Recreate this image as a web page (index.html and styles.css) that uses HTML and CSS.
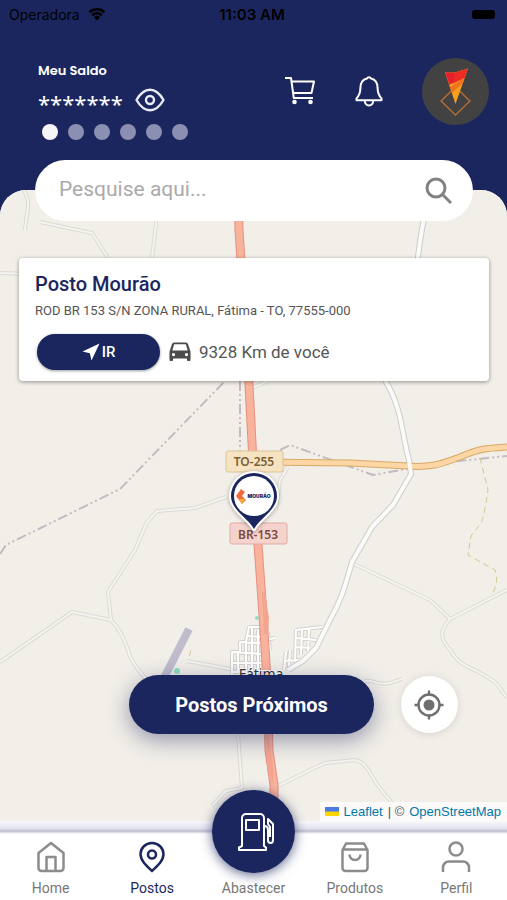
FILE: index.html
```html
<!DOCTYPE html>
<html lang="pt-BR">
<head>
    <meta charset="UTF-8">
    <meta name="viewport" content="width=device-width, initial-scale=1.0">
    <title>Postos</title>
    <link rel="stylesheet" href="styles.css">
</head>
<body>
    <div class="app">
        <div class="status-bar">
            <div class="carrier">
                <span>Operadora</span>
                <svg width="18" height="14" viewBox="0 0 18 14">
                    <path d="M1.5 5.2a11 11 0 0 1 15 0M4.2 8.2a7 7 0 0 1 9.6 0" fill="none" stroke="#000" stroke-width="2.6"/>
                    <path d="M9 13.6 5.9 10.3a4.5 4.5 0 0 1 6.2 0z"/>
                </svg>
            </div>
            <span class="clock">11:03 AM</span>
            <span class="battery"></span>
        </div>

        <header class="header">
            <div class="balance">
                <span class="balance-label">Meu Saldo</span>
                <div class="balance-row">
                    <span class="balance-value">*******</span>
                    <button type="button" class="icon-btn" aria-label="Mostrar saldo">
                        <svg width="30" height="24" viewBox="0 0 30 24" fill="none" stroke="#e8ebf5" stroke-width="2.4">
                            <path d="M1.5 12C5.500 5 10 1.800 15 1.800S24.500 5 28.500 12C24.500 19 20 22.200 15 22.200S5.500 19 1.500 12z" stroke-linejoin="round"/>
                            <circle cx="15" cy="12" r="4"/>
                        </svg>
                    </button>
                </div>
                <div class="dots">
                    <span class="dot active"></span>
                    <span class="dot"></span>
                    <span class="dot"></span>
                    <span class="dot"></span>
                    <span class="dot"></span>
                    <span class="dot"></span>
                </div>
            </div>
            <div class="actions">
                <button type="button" class="icon-btn" aria-label="Carrinho">
                    <svg width="32" height="30" viewBox="0 0 32 30" fill="none" stroke="#fff" stroke-width="2" stroke-linejoin="round">
                        <path d="M1 2h6l2.800 20H29"/>
                        <path d="M7.500 5.500H30L27.500 17H9.200"/>
                        <circle cx="10.500" cy="26" r="2.300" fill="#fff" stroke="none"/>
                        <circle cx="26.500" cy="26" r="2.300" fill="#fff" stroke="none"/>
                    </svg>
                </button>
                <button type="button" class="icon-btn" aria-label="Notificações">
                    <svg width="30" height="34" viewBox="0 0 30 34" fill="none" stroke="#fff" stroke-width="2" stroke-linejoin="round">
                        <path d="M13 4.500a2.200 2.200 0 0 1 4 0c4 1 6.600 4.500 6.600 9.500 0 5 .8 7.300 3.900 10.400v1.800h-25v-1.800C5.600 21.300 6.400 19 6.400 14c0-5 2.600-8.500 6.600-9.500z"/>
                        <path d="M10.800 26.500c0 3 1.800 5 4.200 5s4.200-2 4.200-5"/>
                    </svg>
                </button>
                <a href="#perfil" class="avatar" aria-label="Minha conta">
                    <svg width="67" height="67" viewBox="0 0 67 67">
                        <circle cx="33.500" cy="33.500" r="33.500" fill="#424242"/>
                        <path d="M33.500 29 48 43 33.500 57 19 43z" fill="none" stroke="#b87035" stroke-width="1.300"/>
                        <path d="M23 14.500 33 14.500 46 10.500 33.500 46z" fill="#f5a11c"/>
                        <path d="M23 14.500 33.500 14.500 33 23 27.500 27z" fill="#e3202b"/>
                        <path d="M33.500 14.500 46 10.500 42.500 20 30 26z" fill="#ee2a24"/>
                        <path d="M42.500 20 28 29 30 35 41 25z" fill="#f0711f"/>
                    </svg>
                </a>
            </div>
        </header>

        <main class="map">
            <svg class="map-canvas" viewBox="0 190 507 631" preserveAspectRatio="xMidYMid slice" aria-label="Mapa">
                <defs>
                    <path id="tracks" d="M24 190C32 205 26 212 25 230M40 222 92 233 108 258M157 215 152 258M0 273 30 274M226 497 195 508 157 511 147 522 135 550 108 592 111 620M0 662 72 612 111 620C120 629 124 638 128 650 130 660 137 670 152 685M187 661 235 670M252 388 268 381M288 467 280 480 276 510M352 563 430 600 450 619 507 590M450 619C438 632 441 640 451 651 460 668 476 668 490 679 500 683 502 694 507 697M365 681C373 679 376 686 390 683L402 679M276 787 312 769 325 763 355 760C370 763 370 780 389 799 396 808 398 822 402 830M238 735 242 788 226 791 212 806"/>
                    <path id="local-road" d="M425 215C420 235 419 248 416 275L390 340 386 382C402 408 402 435 409 460L411 474 393 505 372 527 352 562C346 582 343 597 330 620L316 648 303 661 288 670"/>
                    <path id="streets" d="M249 627H265M249 627 246 642 240 642 240 652 232 652 232 674M232 652 262 654M240 642 262 643M246 642V674M252 628V672M258 630V673M238 652V673M232 663H264M232 672H266M246 636 264 637M266 640 275 638M268 632 270 650M296 630 322 627M296 630 295 662M302 630 301 655M309 629 308 652M296 638 316 640M295 647 310 648M286 652 284 670M290 650 289 667M284 661 300 660"/>
                </defs>
                <rect y="190" width="507" height="631" fill="#f2efe9"/>

                <g class="boundary">
                    <path d="M0 554 6 545 120 489 225 381"/>
                    <path d="M240 381V472"/>
                    <path d="M280 450 290 445 373 475 440 463 507 456"/>
                </g>
                <path class="footpath" d="M480 458 488 490C482 530 482 520 471 536L468 555 495 570C499 580 495 588 492 596M191 650 188 660"/>

                <use href="#tracks" class="track-case"/>
                <use href="#tracks" class="track"/>
                <use href="#streets" class="street-case"/>
                <use href="#streets" class="street"/>
                <use href="#local-road" class="road-case"/>

                <path class="runway" d="M189 629 164 678"/>
                <circle cx="177" cy="671" r="3" fill="#8de0c0"/>
                <circle cx="257" cy="618" r="2" fill="#8de0c0"/>

                <path class="state-case" d="M256 462 350 463 408 466C435 468 445 462 460 457 480 448 488 448 507 447"/>
                <path class="state" d="M256 462 350 463 408 466C435 468 445 462 460 457 480 448 488 448 507 447"/>
                <use href="#local-road" class="road"/>
                <path class="highway-case" d="M238 190 239 230 249 385 253 462 257 530 263 615 267 680 269 750 274 785 274 830"/>
                <path class="highway" d="M238 190 239 230 249 385 253 462 257 530 263 615 267 680 269 750 274 785 274 830"/>
                <path d="M262 592 265 592 269 618 268 634 264 634z" fill="#f4a592"/>
                <path d="M266 735 269 735 274 775 272 785 267 765z" fill="#f4a592"/>

                <text class="town" x="261" y="679">Fátima</text>

                <rect x="226" y="451" width="57" height="21" rx="2" fill="#f6e3c2" stroke="#dcc398"/>
                <text class="shield" x="254" y="466" fill="#7a5f34">TO-255</text>
                <rect x="230" y="523" width="57" height="21" rx="2" fill="#f5d3cd" stroke="#e0aaa2"/>
                <text class="shield" x="258" y="539" fill="#7d4a44">BR-153</text>

                <path class="pin" d="M254 529C249 519 231 510 231 496a23 23 0 0 1 46 0C277 510 259 519 254 529z"/>
                <circle cx="254" cy="496" r="20" fill="#fff"/>
                <path d="M236 496 241 489 245 492 242 496 246 500 242 504z" fill="#f26a3c"/>
                <path d="M239 499 245 499 242 504z" fill="#fbb034"/>
                <text class="pin-name" x="259" y="498">MOURÃO</text>
            </svg>

            <form class="search">
                <input type="search" placeholder="Pesquise aqui..." aria-label="Pesquise aqui">
                <button type="submit" class="icon-btn" aria-label="Pesquisar">
                    <svg width="28" height="28" viewBox="0 0 28 28" fill="none" stroke="#828282" stroke-width="3">
                        <circle cx="11" cy="11" r="9"/>
                        <path d="M17.500 17.500 26 26"/>
                    </svg>
                </button>
            </form>

            <article class="station">
                <h1>Posto Mourão</h1>
                <p class="address">ROD BR 153 S/N ZONA RURAL, Fátima - TO, 77555-000</p>
                <div class="station-row">
                    <button type="button" class="go-btn">
                        <svg width="18" height="18" viewBox="0 0 18 18"><path d="M17.500.5 9.500 17.500 7.800 10.200.5 8.500z" fill="#fff"/></svg>
                        IR
                    </button>
                    <svg class="car" width="22" height="20" viewBox="0 0 22 20" fill="#4b4b4b">
                        <path fill-rule="evenodd" d="M5 .5h12q1.500 0 2 1.500l2.500 7.500V18q0 1-1 1h-1.500q-1 0-1-1v-1.500h-14V18q0 1-1 1H1.500q-1 0-1-1V9.500L3 2Q3.500.5 5 .5zM5.200 2.300 3.300 8.500h15.400l-1.900-6.200zM4.500 11a1.600 1.600 0 1 0 .01 0zM17.500 11a1.600 1.600 0 1 0 .01 0z"/>
                    </svg>
                    <span class="distance">9328 Km de você</span>
                </div>
            </article>

            <div class="map-controls">
                <button type="button" class="nearby-btn">Postos Próximos</button>
                <button type="button" class="locate-btn" aria-label="Minha localização">
                    <svg width="30" height="30" viewBox="0 0 30 30">
                        <circle cx="15" cy="15" r="10.500" fill="none" stroke="#6f6f6f" stroke-width="2.400"/>
                        <path d="M15 .5v5M15 24.500v5M.5 15h5M24.500 15h5" stroke="#6f6f6f" stroke-width="2.400"/>
                        <circle cx="15" cy="15" r="5.500" fill="#6f6f6f"/>
                    </svg>
                </button>
            </div>

            <div class="attribution">
                <svg width="14" height="9" viewBox="0 0 14 9"><path fill="#4c7be1" d="M0 0h14v5H0z"/><path fill="#ffd500" d="M0 4.500h14V9H0z"/></svg>
                <a href="#leaflet">Leaflet</a> | © <a href="#osm">OpenStreetMap</a>
            </div>
        </main>

        <nav class="tabs">
            <a href="#home" class="tab">
                <svg width="30" height="32" viewBox="0 0 30 32">
                    <path d="M2.500 12 15 2 27.500 12V27a3 3 0 0 1-3 3H5.500a3 3 0 0 1-3-3z"/>
                    <path d="M10.500 30V16h9v14"/>
                </svg>
                <span>Home</span>
            </a>
            <a href="#postos" class="tab current">
                <svg width="30" height="32" viewBox="0 0 30 32">
                    <path d="M15 30C9 24.500 3.500 19.500 3.500 13a11.500 11 0 0 1 23 0C26.500 19.500 21 24.500 15 30z"/>
                    <circle cx="15" cy="13.500" r="4"/>
                </svg>
                <span>Postos</span>
            </a>
            <a href="#abastecer" class="tab">
                <span class="fuel">
                    <svg width="38" height="40" viewBox="-3 0 38 40">
                        <path d="M5 34V6a4 4 0 0 1 4-4h14a4 4 0 0 1 4 4v28l2 1.500V38H2v-2.500z"/>
                        <path d="M9 8h13v10H9z"/>
                        <path d="M27 14q4 0 4 4v10q0 3 2.500 3t2.500-3V12l-5-5v5l2 3v10"/>
                    </svg>
                </span>
                <span>Abastecer</span>
            </a>
            <a href="#produtos" class="tab">
                <svg width="30" height="32" viewBox="0 0 30 32">
                    <path d="M2.500 9 6 2.500h18L27.500 9v18a3 3 0 0 1-3 3h-19a3 3 0 0 1-3-3zM2.500 8.500h25"/>
                    <path d="M9.500 13.500a5.500 5.500 0 0 0 11 0"/>
                </svg>
                <span>Produtos</span>
            </a>
            <a href="#perfil" class="tab">
                <svg width="30" height="32" viewBox="0 0 30 32">
                    <circle cx="15" cy="8" r="6.500"/>
                    <path d="M2 31v-4.500a6 6 0 0 1 6-6h14a6 6 0 0 1 6 6V31"/>
                </svg>
                <span>Perfil</span>
            </a>
        </nav>
    </div>
</body>
</html>
```
FILE: styles.css
```css
* {
    box-sizing: border-box;
}
body {
    margin: 0;
    font-family: Roboto, sans-serif;
    background-color: #1c265e;
}
button {
    border: none;
    font-family: inherit;
    cursor: pointer;
}
svg {
    display: block;
    flex-shrink: 0;
}
.app {
    display: flex;
    flex-direction: column;
    min-height: 100vh;
}
.icon-btn {
    padding: 0;
    background: none;
}

/* Status bar */
.status-bar {
    display: grid;
    grid-template-columns: 1fr auto 1fr;
    align-items: center;
    height: 28px;
    padding: 0 12px 0 9px;
    font-family: Inter, sans-serif;
    font-size: 14px;
    color: #000;
}
.carrier {
    display: flex;
    align-items: center;
    gap: 8px;
}
.clock {
    font-size: 15px;
    font-weight: 600;
}
.battery {
    justify-self: end;
    width: 23px;
    height: 9px;
    border-radius: 3px;
    background: #000;
}

/* Header */
.header {
    display: flex;
    justify-content: space-between;
    padding: 32px 18px 50px 38px;
}
.balance-label {
    display: block;
    font-family: Poppins, Inter, sans-serif;
    font-size: 13px;
    font-weight: 600;
    line-height: 22px;
    color: #fff;
}
.balance-row {
    display: flex;
    align-items: center;
    gap: 12px;
    height: 36px;
}
.balance-value {
    height: 24px;
    font-family: "Noto Sans", sans-serif;
    font-size: 22px;
    line-height: 30px;
    color: #fff;
}
.dots {
    display: flex;
    gap: 10px;
    padding: 6px 4px 0;
}
.dot {
    width: 16px;
    height: 16px;
    border-radius: 50%;
    background: #8b90b3;
}
.dot.active {
    background: #f6f6f8;
}
.actions {
    display: flex;
    align-items: center;
    height: 62px;
    gap: 38px;
}

/* Map */
.map {
    position: relative;
    flex: 1;
    display: flex;
    flex-direction: column;
}
.map-canvas {
    position: absolute;
    inset: 0;
    width: 100%;
    height: 100%;
    border-radius: 26px 26px 0 0;
    background: #f2efe9;
}
.map-canvas path, .map-canvas use {
    stroke-linejoin: round;
}
.boundary {
    fill: none;
    stroke: #c3bbc3;
    stroke-width: 2;
    stroke-dasharray: 10 3 2 3 2 3;
}
.footpath {
    fill: none;
    stroke: #cfc990;
    stroke-dasharray: 6 4;
    stroke-width: 1;
}
.track-case, .track, .street-case, .street, .road-case, .road,
.state-case, .state, .highway-case, .highway, .runway {
    fill: none;
}
.track-case {
    stroke: #dcdad5;
    stroke-width: 4;
}
.track {
    stroke: #f5f4f0;
    stroke-width: 2;
}
.street-case {
    stroke: #d3d1cd;
    stroke-width: 4;
}
.street {
    stroke: #fff;
    stroke-width: 2;
}
.road-case {
    stroke: #cfcdc9;
    stroke-width: 6;
}
.road {
    stroke: #fbfbfa;
    stroke-width: 4;
}
.runway {
    stroke: #c0bccd;
    stroke-width: 8;
}
.state-case {
    stroke: #d9a866;
    stroke-width: 7;
}
.state {
    stroke: #fcd6a4;
    stroke-width: 5;
}
.highway-case {
    stroke: #e59080;
    stroke-width: 9;
}
.highway {
    stroke: #f9b29c;
    stroke-width: 7;
}
.town, .shield, .pin-name {
    font-family: "Noto Sans", sans-serif;
    text-anchor: middle;
}
.town {
    font-size: 14px;
    fill: #333;
    stroke: #fff;
    stroke-width: 2;
    paint-order: stroke;
}
.shield {
    font-size: 12px;
    font-weight: 600;
}
.pin {
    fill: #1c265e;
    stroke: #fff;
    stroke-width: 4;
    paint-order: stroke;
    filter: drop-shadow(0 1px 2px rgba(0, 0, 0, 0.3));
}
.pin-name {
    font-family: Inter, sans-serif;
    font-size: 5px;
    font-weight: 900;
    fill: #1c265e;
}
.search {
    position: relative;
    display: flex;
    align-items: center;
    height: 61px;
    margin: -30px 34px 0 35px;
    padding: 0 20px 0 24px;
    border-radius: 31px;
    background: #fff;
}
.search input {
    flex: 1;
    min-width: 0;
    padding: 0 0 4px;
    border: none;
    outline: none;
    background: none;
    font-family: inherit;
    font-size: 21px;
}
.search input::placeholder {
    color: #aaa;
}
.station {
    position: relative;
    margin: 37px 18px 0 19px;
    padding: 14px 16px 11px;
    border-radius: 4px;
    background: #fff;
    box-shadow: 0 1px 4px rgba(0, 0, 0, 0.4);
}
.station h1 {
    margin: 0;
    font-size: 20px;
    font-weight: 500;
    line-height: 25px;
    color: #1c265e;
}
.address {
    margin: 4px 0 13px;
    font-size: 13px;
    line-height: 20px;
    color: #555;
}
.station-row {
    display: flex;
    align-items: center;
    padding-left: 2px;
}
.go-btn {
    display: flex;
    align-items: center;
    justify-content: center;
    gap: 2px;
    width: 123px;
    height: 36px;
    border-radius: 18px;
    background: #1c265e;
    box-shadow: 0 1px 3px rgba(0, 0, 0, 0.4);
    color: #fff;
    font-size: 15px;
    font-weight: 500;
}
.car {
    margin: 0 8px 0 9px;
}
.distance {
    font-size: 17px;
    color: #555;
}
.map-controls {
    position: relative;
    display: grid;
    grid-template-columns: 1fr auto 1fr;
    align-items: center;
    margin-top: auto;
    padding: 0 4px 68px 0;
}
.nearby-btn {
    grid-column: 2;
    height: 59px;
    padding: 0 46px;
    border-radius: 30px;
    background: #1c265e;
    box-shadow: 0 6px 22px rgba(28, 38, 94, 0.45);
    color: #fff;
    font-size: 20px;
    font-weight: 700;
}
.locate-btn {
    display: grid;
    place-items: center;
    width: 57px;
    height: 57px;
    margin-left: 27px;
    padding: 0;
    border-radius: 50%;
    background: #fff;
    box-shadow: 0 1px 8px rgba(0, 0, 0, 0.12);
}
.attribution {
    position: relative;
    display: flex;
    align-items: center;
    align-self: flex-end;
    gap: 5px;
    height: 19px;
    padding: 0 6px 0 5px;
    background: rgba(255, 255, 255, 0.7);
    font-family: "Liberation Sans", Arial, sans-serif;
    font-size: 13px;
    color: #555;
}
.attribution a {
    color: #0078a8;
    text-decoration: none;
}

/* Bottom tabs */
.tabs {
    position: relative;
    display: grid;
    grid-template-columns: repeat(5, 1fr);
    padding: 20px 0 3px;
    background: linear-gradient(#f9f9fb, #dfe1ee 8px, #b9bbcc 10px, #fff 13px);
}
.tab {
    display: flex;
    flex-direction: column;
    align-items: center;
    justify-content: flex-end;
    gap: 6px;
    font-size: 14px;
    line-height: 18px;
    color: #777;
    text-decoration: none;
}
.tab svg {
    fill: none;
    stroke: #8c8c8c;
    stroke-width: 2.5;
    stroke-linejoin: round;
}
.tab.current {
    color: #1c265e;
}
.tab.current svg {
    stroke: #1c265e;
}
.fuel {
    display: grid;
    place-items: center;
    width: 83px;
    height: 83px;
    margin-top: -51px;
    border-radius: 50%;
    background: #1c265e;
    box-shadow: 0 2px 12px rgba(28, 38, 94, 0.7);
}
.tab .fuel svg {
    overflow: visible;
    stroke: #fff;
    stroke-width: 2;
}
```
